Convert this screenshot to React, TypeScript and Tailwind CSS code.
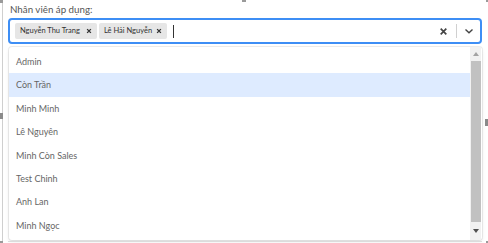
import React from "react";

const items = ["Admin", "Còn Trần", "Minh Minh", "Lê Nguyên", "Minh Còn Sales", "Test Chinh", "Anh Lan", "Minh Ngọc"];

function Tag({ label, w }: { label: string; w: string }) {
  return (
    <div className={`flex items-center justify-between h-[16px] bg-[#e6e6e6] rounded-[2px] pl-[5px] pr-[5px] ${w}`}>
      <span className="text-[7.5px] text-[#333] whitespace-nowrap">{label}</span>
      <svg width="6" height="6" viewBox="0 0 8 8"><path d="M1.5 1.5 L6.5 6.5 M6.5 1.5 L1.5 6.5" stroke="#333" strokeWidth="1.8" /></svg>
    </div>
  );
}

export default function App() {
  return (
    <div className="relative w-[488px] h-[243px] bg-white overflow-hidden" style={{ fontFamily: 'Lato, "Open Sans", sans-serif' }}>
      <div className="ml-[2px] h-full border-l border-[#cfcfcf] pl-[5px] pr-[6px] pt-[3px]">
        <div className="text-[9.75px] leading-[13px] text-[#555] pl-[2px]">Nhân viên áp dụng:</div>
        <div className="mt-[2px] h-[26px] border-2 border-[#3d8ef5] rounded-[4px] flex items-center pl-[5px] pr-[6px]">
          <div className="flex items-center gap-[2px] flex-1">
            <Tag label="Nguyễn Thu Trang" w="w-[82px]" />
            <Tag label="Lê Hải Nguyễn" w="w-[68px]" />
            <div className="ml-[4px] w-px h-[13px] bg-[#333]" />
          </div>
          <svg width="9" height="9" viewBox="0 0 8 8" className="mr-[8px]"><path d="M1.5 1.5 L6.5 6.5 M6.5 1.5 L1.5 6.5" stroke="#444" strokeWidth="1.5" /></svg>
          <div className="w-px h-[14px] bg-[#d0d0d0]" />
          <svg width="10" height="8" viewBox="0 0 10 8" className="ml-[7px]"><path d="M1.5 2.5 L5 5.8 L8.5 2.5" stroke="#444" strokeWidth="1.4" fill="none" /></svg>
        </div>
        <div className="mt-[3px] ml-[1px] h-[193px] bg-white rounded-[3px] shadow-[0_0_0_1px_rgba(0,0,0,0.07),0_2px_4px_rgba(0,0,0,0.08)] flex">
          <div className="flex-1 pt-[3px]">
            {items.map((t, i) => (
              <div key={t} className={`h-[23.4px] flex items-center pl-[7px] text-[9px] text-[#666] ${i === 1 ? "bg-[#deebff]" : ""}`}>{t}</div>
            ))}
          </div>
          <div className="w-[11px] mr-[1px] bg-[#f1f1f1] flex flex-col items-center">
            <div className="h-[14px] flex items-center justify-center">
              <svg width="6" height="4" viewBox="0 0 6 4"><path d="M0 4 L3 0 L6 4 Z" fill="#a3a3a3" /></svg>
            </div>
            <div className="w-[10px] flex-1 bg-[#c1c1c1]" />
            <div className="h-[18px] flex items-center justify-center">
              <svg width="6" height="4" viewBox="0 0 6 4"><path d="M0 0 L6 0 L3 4 Z" fill="#505050" /></svg>
            </div>
          </div>
        </div>
        <div className="mt-[1px] h-px bg-[#dcdcdc]" />
      </div>
      <div className="absolute left-0 top-0 w-[3px] h-[3px] bg-[#9a9a9a]" />
      <div className="absolute left-[242px] top-0 w-[4px] h-[2px] bg-[#9a9a9a]" />
      <div className="absolute right-0 top-0 w-[2px] h-[2px] bg-[#9a9a9a]" />
      <div className="absolute left-0 top-[113px] w-[3px] h-[6px] bg-[#8a8a8a]" />
      <div className="absolute right-0 top-[119px] w-[3px] h-[7px] bg-[#8a8a8a]" />
      <div className="absolute left-0 bottom-0 w-[3px] h-[2px] bg-[#9a9a9a]" />
      <div className="absolute right-0 bottom-0 w-[2px] h-[2px] bg-[#9a9a9a]" />
    </div>
  );
}
